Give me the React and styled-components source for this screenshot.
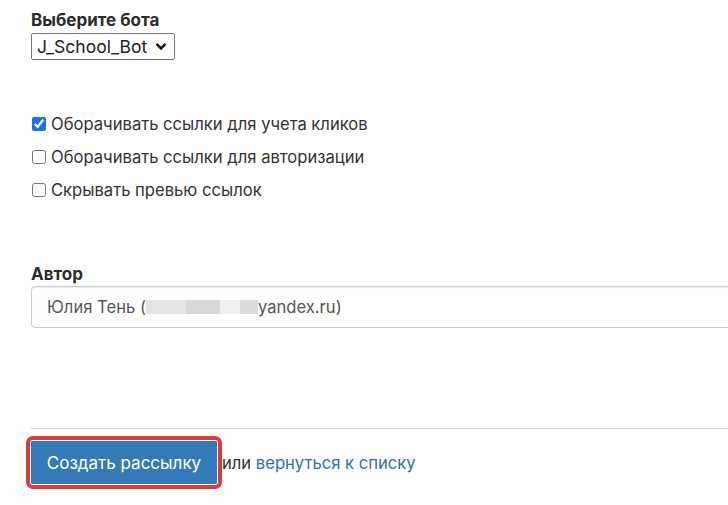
import styled, { createGlobalStyle } from 'styled-components';

const GlobalStyle = createGlobalStyle`
  body {
    margin: 0;
    background: #fff;
    font-family: 'Inter', 'Noto Sans', sans-serif;
    color: #333;
  }
`;

export default function App() {
  return (
    <Page>
      <GlobalStyle />
      <Label>Выберите бота</Label>
      <SelectWrap>
        <Select defaultValue="J_School_Bot">
          <option>J_School_Bot</option>
        </Select>
        <Chevron width="12" height="9" viewBox="0 0 12 9">
          <path d="M1.5 1.8 L6 6.3 L10.5 1.8" fill="none" stroke="#1a1a1a" strokeWidth="2.6" />
        </Chevron>
      </SelectWrap>

      <Checks>
        <CheckRow>
          <Checkbox type="checkbox" defaultChecked />
          Оборачивать ссылки для учета кликов
        </CheckRow>
        <CheckRow>
          <Checkbox type="checkbox" />
          Оборачивать ссылки для авторизации
        </CheckRow>
        <CheckRow>
          <Checkbox type="checkbox" />
          Скрывать превью ссылок
        </CheckRow>
      </Checks>

      <AuthorLabel>Автор</AuthorLabel>
      <Field>
        Юлия Тень (
        <Redacted $w={40} $tone="#e4e4e4" />
        <Redacted $w={34} $tone="#d8d8d8" />
        <Redacted $w={20} $tone="#efefef" />
        <Redacted $w={18} $tone="#dcdcdc" />
        yandex.ru)
      </Field>

      <Divider />
      <Actions>
        <Highlight>
          <SubmitButton>Создать рассылку</SubmitButton>
        </Highlight>
        <span>или <BackLink href="#">вернуться к списку</BackLink></span>
      </Actions>
    </Page>
  );
}

const Page = styled.div`
  padding: 9px 0 0 31px;
  width: 697px;
  overflow: hidden;
  display: flex;
  flex-direction: column;
  align-items: flex-start;
  font-size: 16.6px;
`;
const Label = styled.div`
  font-weight: 700;
  font-size: 17px;
  line-height: 22px;
  color: #2b2b2b;
`;
const AuthorLabel = styled(Label)`
  margin-top: 62px;
`;
const SelectWrap = styled.div`
  position: relative;
  margin-top: 2px;
`;
const Select = styled.select`
  appearance: none;
  font-family: 'Inter', sans-serif;
  font-size: 17.5px;
  color: #222;
  background: #fff;
  border: 1px solid #767676;
  border-radius: 2px;
  height: 27px;
  width: 144px;
  padding: 0 0 0 5px;
`;
const Chevron = styled.svg`
  position: absolute;
  right: 8px;
  top: 9px;
  pointer-events: none;
`;
const Checks = styled.div`
  margin-top: 53px;
  display: flex;
  flex-direction: column;
  gap: 11px;
`;
const CheckRow = styled.label`
  display: flex;
  align-items: center;
  gap: 5px;
  line-height: 22px;
  font-size: 16.6px;
  color: #333;
`;
const Checkbox = styled.input`
  margin: 0 0 0 1px;
  width: 14px;
  height: 14px;
  accent-color: #1a73e8;
`;
const Field = styled.div`
  margin-top: 1px;
  box-sizing: border-box;
  width: 720px;
  height: 42px;
  border: 1px solid #ccc;
  border-radius: 4px;
  box-shadow: inset 0 1px 1px rgba(0, 0, 0, 0.075);
  display: flex;
  align-items: center;
  padding-left: 15px;
  font-size: 16.6px;
  color: #555;
`;
const Redacted = styled.span`
  display: inline-block;
  width: ${p => p.$w}px;
  height: 14px;
  background: ${p => p.$tone};
`;
const Divider = styled.hr`
  margin: 100px 0 0 0;
  width: 720px;
  border: 0;
  border-top: 1px solid #d4d4d4;
`;
const Actions = styled.div`
  margin: 7px 0 0 -5px;
  display: flex;
  align-items: center;
  font-size: 16.6px;
  color: #333;
`;
const Highlight = styled.div`
  border: 4px solid #dd3b3b;
  border-radius: 7px;
  padding: 1px;
  background: #fff;
`;
const SubmitButton = styled.button`
  display: block;
  width: 186px;
  height: 43px;
  border: 0;
  border-radius: 1px;
  background: #337ab7;
  color: #fff;
  font-family: 'Inter', sans-serif;
  font-size: 17px;
`;
const BackLink = styled.a`
  color: #2f72b0;
  text-decoration: none;
`;
